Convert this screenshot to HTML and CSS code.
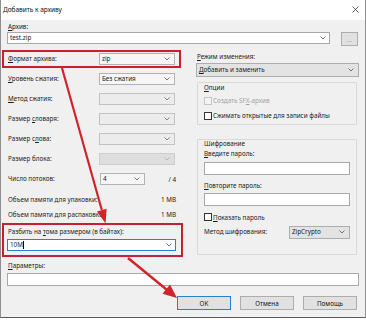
FILE: index.html
```html
<!DOCTYPE html>
<html lang="ru">
<head>
<meta charset="utf-8">
<title>Добавить к архиву</title>
<link rel="stylesheet" href="styles.css">
</head>
<body>
<div class="window">
  <div class="titlebar">
    <span class="title">Добавить к архиву</span>
    <svg class="close" width="7" height="7" viewBox="0 0 7 7"><path d="M0.5 0.5L6.5 6.5M6.5 0.5L0.5 6.5" stroke="#333" stroke-width="0.8" fill="none"/></svg>
  </div>
  <div class="content">
    <div class="lbl top-lbl"><u>А</u>рхив:</div>
    <div class="archive-row">
      <div class="field combo archive">
        <span>test.zip</span>
        <svg class="chev" width="6" height="4" viewBox="0 0 6 4"><polyline points="0.5,0.5 3,3 5.5,0.5" fill="none" stroke="#555" stroke-width="0.8"/></svg>
      </div>
      <div class="btn dots">...</div>
    </div>

    <div class="columns">
      <div class="col left">
        <div class="frow">
          <span class="lbl"><u>Ф</u>ормат архива:</span>
          <div class="sel light"><span>zip</span><svg class="chev" width="6" height="4" viewBox="0 0 6 4"><polyline points="0.5,0.5 3,3 5.5,0.5" fill="none" stroke="#555" stroke-width="0.8"/></svg></div>
        </div>
        <div class="frow">
          <span class="lbl"><u>У</u>ровень сжатия:</span>
          <div class="sel light"><span>Без сжатия</span><svg class="chev" width="6" height="4" viewBox="0 0 6 4"><polyline points="0.5,0.5 3,3 5.5,0.5" fill="none" stroke="#555" stroke-width="0.8"/></svg></div>
        </div>
        <div class="frow">
          <span class="lbl"><u>М</u>етод сжатия:</span>
          <div class="sel empty"><span></span><svg class="chev" width="6" height="4" viewBox="0 0 6 4"><polyline points="0.5,0.5 3,3 5.5,0.5" fill="none" stroke="#666" stroke-width="0.8"/></svg></div>
        </div>
        <div class="frow">
          <span class="lbl">Размер <u>с</u>ловаря:</span>
          <div class="sel empty"><span></span><svg class="chev" width="6" height="4" viewBox="0 0 6 4"><polyline points="0.5,0.5 3,3 5.5,0.5" fill="none" stroke="#666" stroke-width="0.8"/></svg></div>
        </div>
        <div class="frow">
          <span class="lbl">Размер с<u>л</u>ова:</span>
          <div class="sel empty"><span></span><svg class="chev" width="6" height="4" viewBox="0 0 6 4"><polyline points="0.5,0.5 3,3 5.5,0.5" fill="none" stroke="#666" stroke-width="0.8"/></svg></div>
        </div>
        <div class="frow">
          <span class="lbl">Размер блока:</span>
          <div class="sel disabled"><span></span><svg class="chev" width="6" height="4" viewBox="0 0 6 4"><polyline points="0.5,0.5 3,3 5.5,0.5" fill="none" stroke="#b0b0b0" stroke-width="0.8"/></svg></div>
        </div>
        <div class="frow">
          <span class="lbl">Число потоков:</span>
          <div class="sel light short"><span>4</span><svg class="chev" width="6" height="4" viewBox="0 0 6 4"><polyline points="0.5,0.5 3,3 5.5,0.5" fill="none" stroke="#555" stroke-width="0.8"/></svg></div>
          <span class="val">/ 4</span>
        </div>
        <div class="mem"><span>Объем памяти для упаковки:</span><span>1 MB</span></div>
        <div class="mem"><span>Объем памяти для распаковки:</span><span>1 MB</span></div>
        <div class="split">
          <div class="lbl">Разбить на <u>т</u>ома размером (в байтах):</div>
          <div class="field combo focus">
            <span class="typed">10M<i class="caret"></i></span>
            <svg class="chev" width="6" height="4" viewBox="0 0 6 4"><polyline points="0.5,0.5 3,3 5.5,0.5" fill="none" stroke="#555" stroke-width="0.8"/></svg>
          </div>
        </div>
      </div>

      <div class="col right">
        <div class="lbl mode-lbl"><u>Р</u>ежим изменения:</div>
        <div class="sel gray wide"><span><u>Д</u>обавить и заменить</span><svg class="chev" width="6" height="4" viewBox="0 0 6 4"><polyline points="0.5,0.5 3,3 5.5,0.5" fill="none" stroke="#555" stroke-width="0.8"/></svg></div>

        <div class="group opts">
          <div class="gtitle"><u>О</u>пции</div>
          <div class="cbrow disabled"><span class="cb"></span><span>Создать SF<u>X</u>-архив</span></div>
          <div class="cbrow"><span class="cb"></span><span>Сжимать открытые для записи файлы</span></div>
        </div>

        <div class="group enc">
          <div class="gtitle">Шифрование</div>
          <div class="lbl pw1"><u>В</u>ведите пароль:</div>
          <div class="field pwd"></div>
          <div class="lbl pw2"><u>П</u>овторите пароль:</div>
          <div class="field pwd"></div>
          <div class="cbrow show"><span class="cb"></span><span><u>П</u>оказать пароль</span></div>
          <div class="erow">
            <span class="lbl">Метод шифрования:</span>
            <div class="sel gray enc-sel"><span>ZipCrypto</span><svg class="chev" width="6" height="4" viewBox="0 0 6 4"><polyline points="0.5,0.5 3,3 5.5,0.5" fill="none" stroke="#555" stroke-width="0.8"/></svg></div>
          </div>
        </div>
      </div>
    </div>

    <div class="lbl par-lbl"><u>П</u>араметры:</div>
    <div class="field params"></div>

    <div class="buttons">
      <div class="btn main default">OK</div>
      <div class="btn main">Отмена</div>
      <div class="btn main">Помощь</div>
    </div>
  </div>

  <svg class="annot" width="366" height="320" viewBox="0 0 366 320">
    <rect x="3" y="51" width="177" height="16" fill="none" stroke="#c8202e" stroke-width="2"/>
    <rect x="3" y="224" width="179" height="32" fill="none" stroke="#c8202e" stroke-width="2"/>
    <line x1="62" y1="68" x2="101.8" y2="210" stroke="#d0242c" stroke-width="2.2"/>
    <polygon points="97,211.5 106.6,208.8 105.6,223.5" fill="#d0242c"/>
    <line x1="128" y1="258" x2="166.5" y2="289.5" stroke="#d0242c" stroke-width="2.4"/>
    <polygon points="162.5,293.8 170,284.6 177,298" fill="#d0242c"/>
  </svg>
</div>
</body>
</html>
```

FILE: styles.css
```css
* { box-sizing: border-box; }
html, body { margin: 0; padding: 0; background: #ffffff; }
body {
  font-family: "Noto Sans", "Open Sans", sans-serif;
  font-size: 6.3px;
  color: #1b1b1b;
}
u { text-decoration-thickness: 0.5px; text-underline-offset: 1px; }

.window {
  position: relative;
  width: 366px;
  height: 318px;
  background: #f0f0f0;
  border: 1px solid #8e8e8e;
  border-top: none;
  border-bottom-color: #5a5a5a;
  overflow: hidden;
}

.titlebar {
  height: 20px;
  background: #ffffff;
  display: flex;
  align-items: center;
  justify-content: space-between;
  padding: 0 6px 2px 2px;
}
.title { font-size: 6.5px; color: #111; }
.close { display: block; }

.content { padding: 0 6px; }

.lbl { line-height: 10px; white-space: nowrap; }
.top-lbl { margin-top: 2px; padding-left: 1px; }

.archive-row {
  display: flex;
  align-items: flex-start;
  height: 14px;
}

.field {
  background: #ffffff;
  border: 1px solid #a8a8a8;
  height: 12px;
  display: flex;
  align-items: center;
  justify-content: space-between;
  padding: 0 3px 0 2px;
  line-height: 10px;
}
.archive { width: 323px; }
.chev { display: block; flex: none; }

.btn {
  background: #e1e1e1;
  border: 1px solid #adadad;
  display: flex;
  align-items: center;
  justify-content: center;
  color: #111;
}
.dots {
  width: 17px;
  height: 14px;
  margin-left: 11px;
  color: #8a8a8a;
  font-size: 6px;
  padding-top: 2px;
}

.columns {
  display: grid;
  grid-template-columns: 169px 163px;
  column-gap: 20px;
  margin-top: 3px;
  align-items: start;
}

.frow {
  display: flex;
  align-items: center;
  height: 20px;
}
.frow .lbl { width: 92px; padding-left: 1px; }

.sel {
  width: 76px;
  height: 12px;
  border: 1px solid #b3b3b3;
  display: flex;
  align-items: center;
  justify-content: space-between;
  padding: 0 4px 0 2px;
  line-height: 10px;
  white-space: nowrap;
}
.sel.light { background: #f6f6f6; }
.sel.empty { background: #ececec; border-color: #c2c2c2; }
.sel.disabled { background: #dedede; border-color: #cdcdcd; }
.sel.short { width: 45px; margin-left: 1px; }
.sel.gray { background: #e3e3e3; border-color: #adadad; }
.val { margin-left: auto; }

.mem {
  display: flex;
  justify-content: space-between;
  line-height: 15px;
  padding-left: 1px;
}
.frow + .mem { margin-top: 3px; }

.split { margin-top: 1px; padding-bottom: 5px; }
.split .lbl { margin-top: 5px; padding-left: 1px; }
.split .field { margin-top: 2px; }
.focus { border-color: #2a7fd4; }
.typed { display: flex; align-items: center; }
.caret { display: inline-block; width: 0; height: 8px; border-left: 1px solid #000; margin-left: 0.5px; }

.mode-lbl { margin-top: 3px; padding-left: 1px; }
.sel.wide { width: 163px; height: 14px; margin-top: 1px; }

.group {
  border: 1px solid #d9d9d9;
  border-radius: 1px;
  margin: 0 2px 0 1px;
  padding: 0 6px;
}
.gtitle { white-space: nowrap; }
.opts { margin-top: 5px; height: 43px; }
.opts .gtitle { line-height: 10px; }
.cbrow {
  display: flex;
  align-items: center;
  height: 15px;
  white-space: nowrap;
}
.cb {
  width: 8px;
  height: 8px;
  border: 1px solid #333;
  background: #ffffff;
  margin-right: 1px;
  flex: none;
}
.cbrow.disabled { color: #a3a3a3; }
.cbrow.disabled .cb { border-color: #c6c6c6; background: #f3f3f3; }

.enc { margin-top: 14px; height: 116px; }
.enc .gtitle { line-height: 8px; }
.pw1 { margin-top: 1px; }
.pwd { height: 13px; }
.pw1 + .pwd { margin-top: 3px; }
.pw2 { margin-top: 6px; }
.pw2 + .pwd { margin-top: 2px; }
.cbrow.show { height: 10px; margin-top: 6px; }
.erow {
  display: flex;
  align-items: center;
  justify-content: space-between;
  height: 14px;
  margin-top: 3px;
}
.enc-sel { width: 61px; height: 13px; }

.par-lbl { margin-top: 5px; padding-left: 1px; }
.params { height: 13px; margin-top: 2px; }

.buttons {
  display: flex;
  justify-content: flex-end;
  gap: 9px;
  margin-top: 10px;
  padding-right: 2px;
}
.btn.main { width: 54px; height: 14px; }
.btn.default { border-color: #2a7fd4; }

.annot {
  position: absolute;
  left: -1px;
  top: 0;
  pointer-events: none;
}
```
